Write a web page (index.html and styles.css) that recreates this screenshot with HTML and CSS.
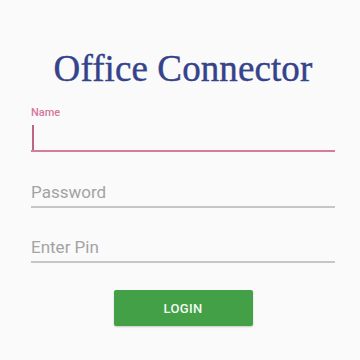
FILE: index.html
```html
<!DOCTYPE html>
<html>
<head>
<meta charset="utf-8">
<link rel="stylesheet" href="styles.css">
</head>
<body>
<div class="form">
  <h1 class="title">Office Connector</h1>
  <div class="field focused">
    <div class="label">Name</div>
    <div class="input"><span class="caret"></span></div>
  </div>
  <div class="field">
    <div class="placeholder">Password</div>
  </div>
  <div class="field pin">
    <div class="placeholder">Enter Pin</div>
  </div>
  <div class="actions">
    <button class="login">LOGIN</button>
  </div>
</div>
</body>
</html>
```
FILE: styles.css
```css
html, body {
  margin: 0;
  padding: 0;
  background: #fafafa;
  width: 360px;
  height: 360px;
  overflow: hidden;
}
.form {
  margin-left: 31px;
  width: 304px;
  display: flex;
  flex-direction: column;
  font-family: Roboto, "Noto Sans", sans-serif;
}
.title {
  margin: 48px 0 0 0;
  font-family: "Liberation Serif", "Times New Roman", serif;
  font-weight: normal;
  font-size: 37px;
  line-height: 42px;
  color: #34438a;
  text-align: center;
  letter-spacing: 0.1px;
  -webkit-text-stroke: 0.4px #34438a;
}
.field.focused {
  margin-top: 16px;
  border-bottom: 2px solid #d57b9b;
}
.label {
  font-size: 11px;
  line-height: 13px;
  font-weight: 500;
  color: #d7789a;
}
.input {
  height: 31px;
  display: flex;
  align-items: flex-end;
}
.caret {
  width: 2px;
  height: 25px;
  margin-left: 1px;
  background: #c06483;
}
.field {
  margin-top: 30px;
  border-bottom: 2px solid #c6c6c6;
}
.field.pin {
  margin-top: 29px;
}
.placeholder {
  font-size: 17px;
  line-height: 20px;
  color: #a3a3a3;
  padding-bottom: 4px;
}
.actions {
  margin-top: 27px;
  display: flex;
  justify-content: center;
}
.login {
  width: 139px;
  height: 36px;
  border: none;
  border-radius: 2px;
  background: #43a047;
  color: #f2fbf2;
  font-family: Roboto, sans-serif;
  font-weight: 500;
  font-size: 13px;
  letter-spacing: 0.3px;
  box-shadow: 0 1px 2px rgba(0,0,0,0.2);
  padding: 0;
}
```
